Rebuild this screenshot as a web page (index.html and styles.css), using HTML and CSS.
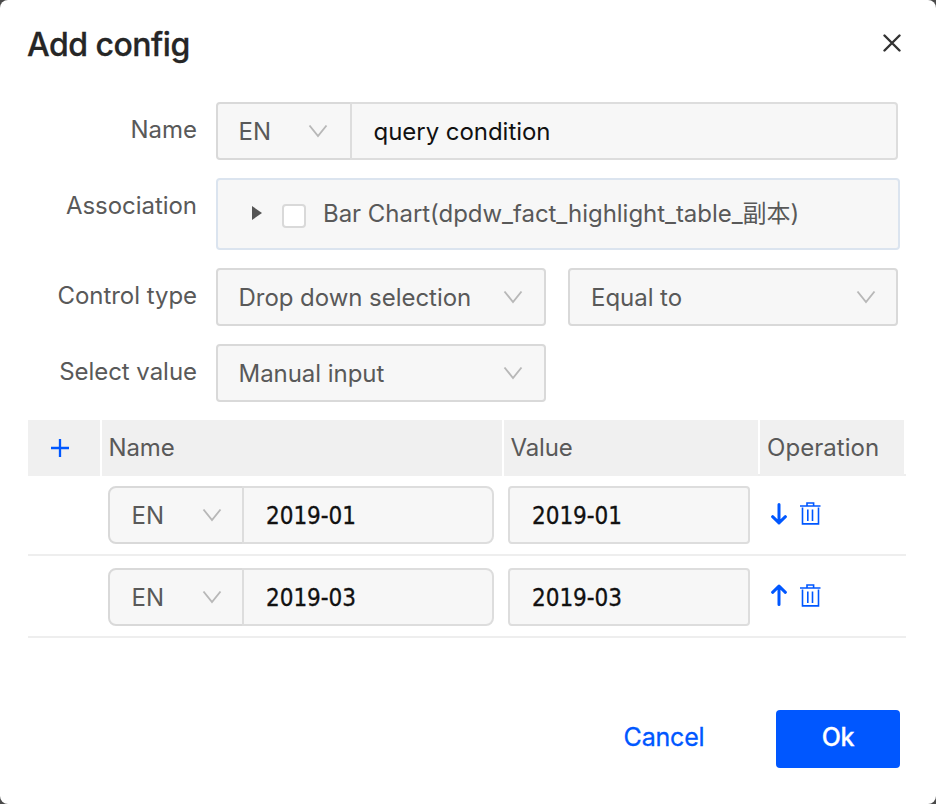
FILE: index.html
```html
<!DOCTYPE html>
<html lang="en">
<head>
<meta charset="utf-8">
<title>Add config</title>
<link rel="stylesheet" href="styles.css">
</head>
<body>
<svg class="sprite" aria-hidden="true">
  <symbol id="chevron" viewBox="0 0 20 14"><path d="M1.500 1.500 10 12l8.500-10.500" fill="none" stroke="#b8b8b8" stroke-width="1.900"/></symbol>
  <symbol id="arrow" viewBox="0 0 16 22"><path d="M8 1.500V20M1.600 13.700 8 19.900l6.400-6.200" fill="none" stroke="currentColor" stroke-width="3" stroke-linecap="round" stroke-linejoin="round"/></symbol>
  <symbol id="trash" viewBox="0 0 22 24"><path d="M1 5h20.500M8 5V2h6.600v3M3.500 6.500v16.400h16V6.500M8.800 8.500v11.500M13.500 8.500v11.500" fill="none" stroke="currentColor" stroke-width="1.600"/></symbol>
</svg>
<main class="dialog">
  <header class="head">
    <h1>Add config</h1>
    <svg class="close" viewBox="0 0 18 18"><path d="M1.500 1.500l15 15M16.500 1.500l-15 15" stroke="#333" stroke-width="2.400" stroke-linecap="round"/></svg>
  </header>

  <section class="form">
    <div class="row">
      <label>Name</label>
      <div class="group">
        <div class="select lang"><span>EN</span><svg><use href="#chevron"/></svg></div>
        <div class="input title"><span>query condition</span></div>
      </div>
    </div>
    <div class="row">
      <label>Association</label>
      <div class="tree">
        <i class="caret"></i>
        <i class="check"></i>
        <span>Bar Chart(dpdw_fact_highlight_table_副本)</span>
      </div>
    </div>
    <div class="row">
      <label>Control type</label>
      <div class="select wide"><span>Drop down selection</span><svg><use href="#chevron"/></svg></div>
      <div class="select wide second"><span>Equal to</span><svg><use href="#chevron"/></svg></div>
    </div>
    <div class="row">
      <label>Select value</label>
      <div class="select wide"><span>Manual input</span><svg><use href="#chevron"/></svg></div>
    </div>
  </section>

  <section class="table">
    <div class="thead">
      <div class="add"><svg viewBox="0 0 18 18"><path d="M9 0v18M0 9h18" stroke="currentColor" stroke-width="2.300"/></svg></div>
      <div>Name</div>
      <div>Value</div>
      <div class="op">Operation</div>
    </div>
    <div class="trow">
      <div class="group round">
        <div class="select lang"><span>EN</span><svg><use href="#chevron"/></svg></div>
        <div class="input num"><span>2019-01</span></div>
      </div>
      <div class="input num value"><span>2019-01</span></div>
      <svg class="arrow"><use href="#arrow"/></svg>
      <svg class="trash"><use href="#trash"/></svg>
    </div>
    <div class="trow">
      <div class="group round">
        <div class="select lang"><span>EN</span><svg><use href="#chevron"/></svg></div>
        <div class="input num"><span>2019-03</span></div>
      </div>
      <div class="input num value"><span>2019-03</span></div>
      <svg class="arrow up"><use href="#arrow"/></svg>
      <svg class="trash"><use href="#trash"/></svg>
    </div>
  </section>

  <footer class="foot">
    <button class="cancel">Cancel</button>
    <button class="ok">Ok</button>
  </footer>
</main>
</body>
</html>
```
FILE: styles.css
```css
* { box-sizing: border-box; }
body {
  margin: 0;
  background: #4a4a4a;
  font: 24px/32px Inter, "Noto Sans CJK SC", sans-serif;
  letter-spacing: -0.04px;
  color: #595959;
}
.sprite { display: none; }
.dialog {
  width: 936px;
  height: 804px;
  padding: 26px 28px 0;
  border-radius: 8px;
  background: #fff;
}
.head { display: flex; justify-content: space-between; height: 76px; }
h1 {
  margin: 0 0 0 -1px;
  font-size: 32px;
  line-height: 38px;
  font-weight: 500;
  letter-spacing: -0.5px;
  color: #262626;
  -webkit-text-stroke: 0.3px #262626;
}
.close { width: 18px; height: 18px; margin: 8px 7px 0 0; }

.form { display: flex; flex-direction: column; gap: 18px; }
.row { display: flex; }
label {
  width: 169px;
  margin-right: 19px;
  padding-top: 12px;
  text-align: right;
}
.group { display: flex; }
.select, .input {
  display: flex;
  align-items: center;
  height: 58px;
  padding: 0 21px 0 20.5px;
  border: 2px solid #d9d9d9;
  border-radius: 4px;
  background: #f7f7f7;
  white-space: nowrap;
}
.select span, .title span { padding-top: 2px; }
.select { justify-content: space-between; }
.select svg { width: 20px; height: 14px; flex: none; }
.input { border-color: #ddd; color: #111; }
.lang { width: 136px; padding-right: 22px; border-radius: 4px 0 0 4px; }
.title { width: 548px; margin-left: -2px; padding-left: 21.5px; border-radius: 0 4px 4px 0; }
.wide { width: 330px; }
.second { margin-left: 22px; padding: 0 20px 0 21px; }
.tree {
  display: flex;
  width: 684px;
  height: 72px;
  padding: 18px 0 0 34px;
  border: 2px solid #dbe4ef;
  border-radius: 4px;
  background: #f7f7f7;
  white-space: nowrap;
}
.caret {
  margin-top: 8px;
  border: solid transparent;
  border-width: 7px 0 7px 10px;
  border-left-color: #555;
  height: 0;
}
.check {
  width: 24px;
  height: 24px;
  margin: 6px 17px 0 20px;
  border: 2px solid #d9d9d9;
  border-radius: 4px;
  background: #fff;
}

.table { margin-top: 18px; width: 878px; }
.thead {
  display: grid;
  grid-template-columns: 72px 400px 254px 144px;
  gap: 2px;
  height: 56px;
  line-height: 56px;
  background: linear-gradient(#eee, #eee) 100% 100% / 148px 2px no-repeat;
}
.thead div { padding-left: 6.500px; background: #f0f0f0; letter-spacing: -0.15px; }
.thead .op { padding-left: 7px; letter-spacing: 0.05px; }
.thead .add { display: flex; align-items: center; justify-content: center; padding: 0 8px 0 0; color: #0057ff; }
.add svg { width: 18px; height: 18px; }
.trow {
  display: flex;
  height: 80px;
  padding: 10px 0 0 80px;
  border-bottom: 2px solid #eee;
}
.trow + .trow { height: 82px; padding-top: 12px; }
.round .lang { padding: 0 20px 0 21.5px; border-radius: 8px 0 0 8px; }
.round .input { width: 252px; margin-left: -2px; padding-left: 22px; border-radius: 0 8px 8px 0; }
.value { width: 242px; margin-left: 14px; padding-left: 22px; }
.num { font-family: "DejaVu Sans Condensed", "DejaVu Sans", sans-serif; font-stretch: condensed; color: #111; }
.num span { padding-top: 2px; -webkit-text-stroke: 0.3px #111; }
.arrow { width: 16px; height: 22px; margin: 17px 13px 0 21px; color: #0057ff; }
.up { margin-top: 16px; transform: rotate(180deg); }
.trash { width: 22px; height: 24px; margin: 15px 0 0 -1px; color: #0057ff; }

.foot { display: flex; justify-content: flex-end; margin-top: 72px; }
button {
  height: 58px;
  border: 0;
  padding: 0 0 4px;
  border-radius: 4px;
  font: 25px/32px Inter, sans-serif;
  letter-spacing: -0.2px;
  background: none;
  color: #0057ff;
  -webkit-text-stroke: 0.3px currentColor;
}
.cancel { width: 124px; margin-right: 50px; }
.ok { width: 124px; margin-right: 8px; background: #0057ff; color: #fff; font-weight: 500; }
```
